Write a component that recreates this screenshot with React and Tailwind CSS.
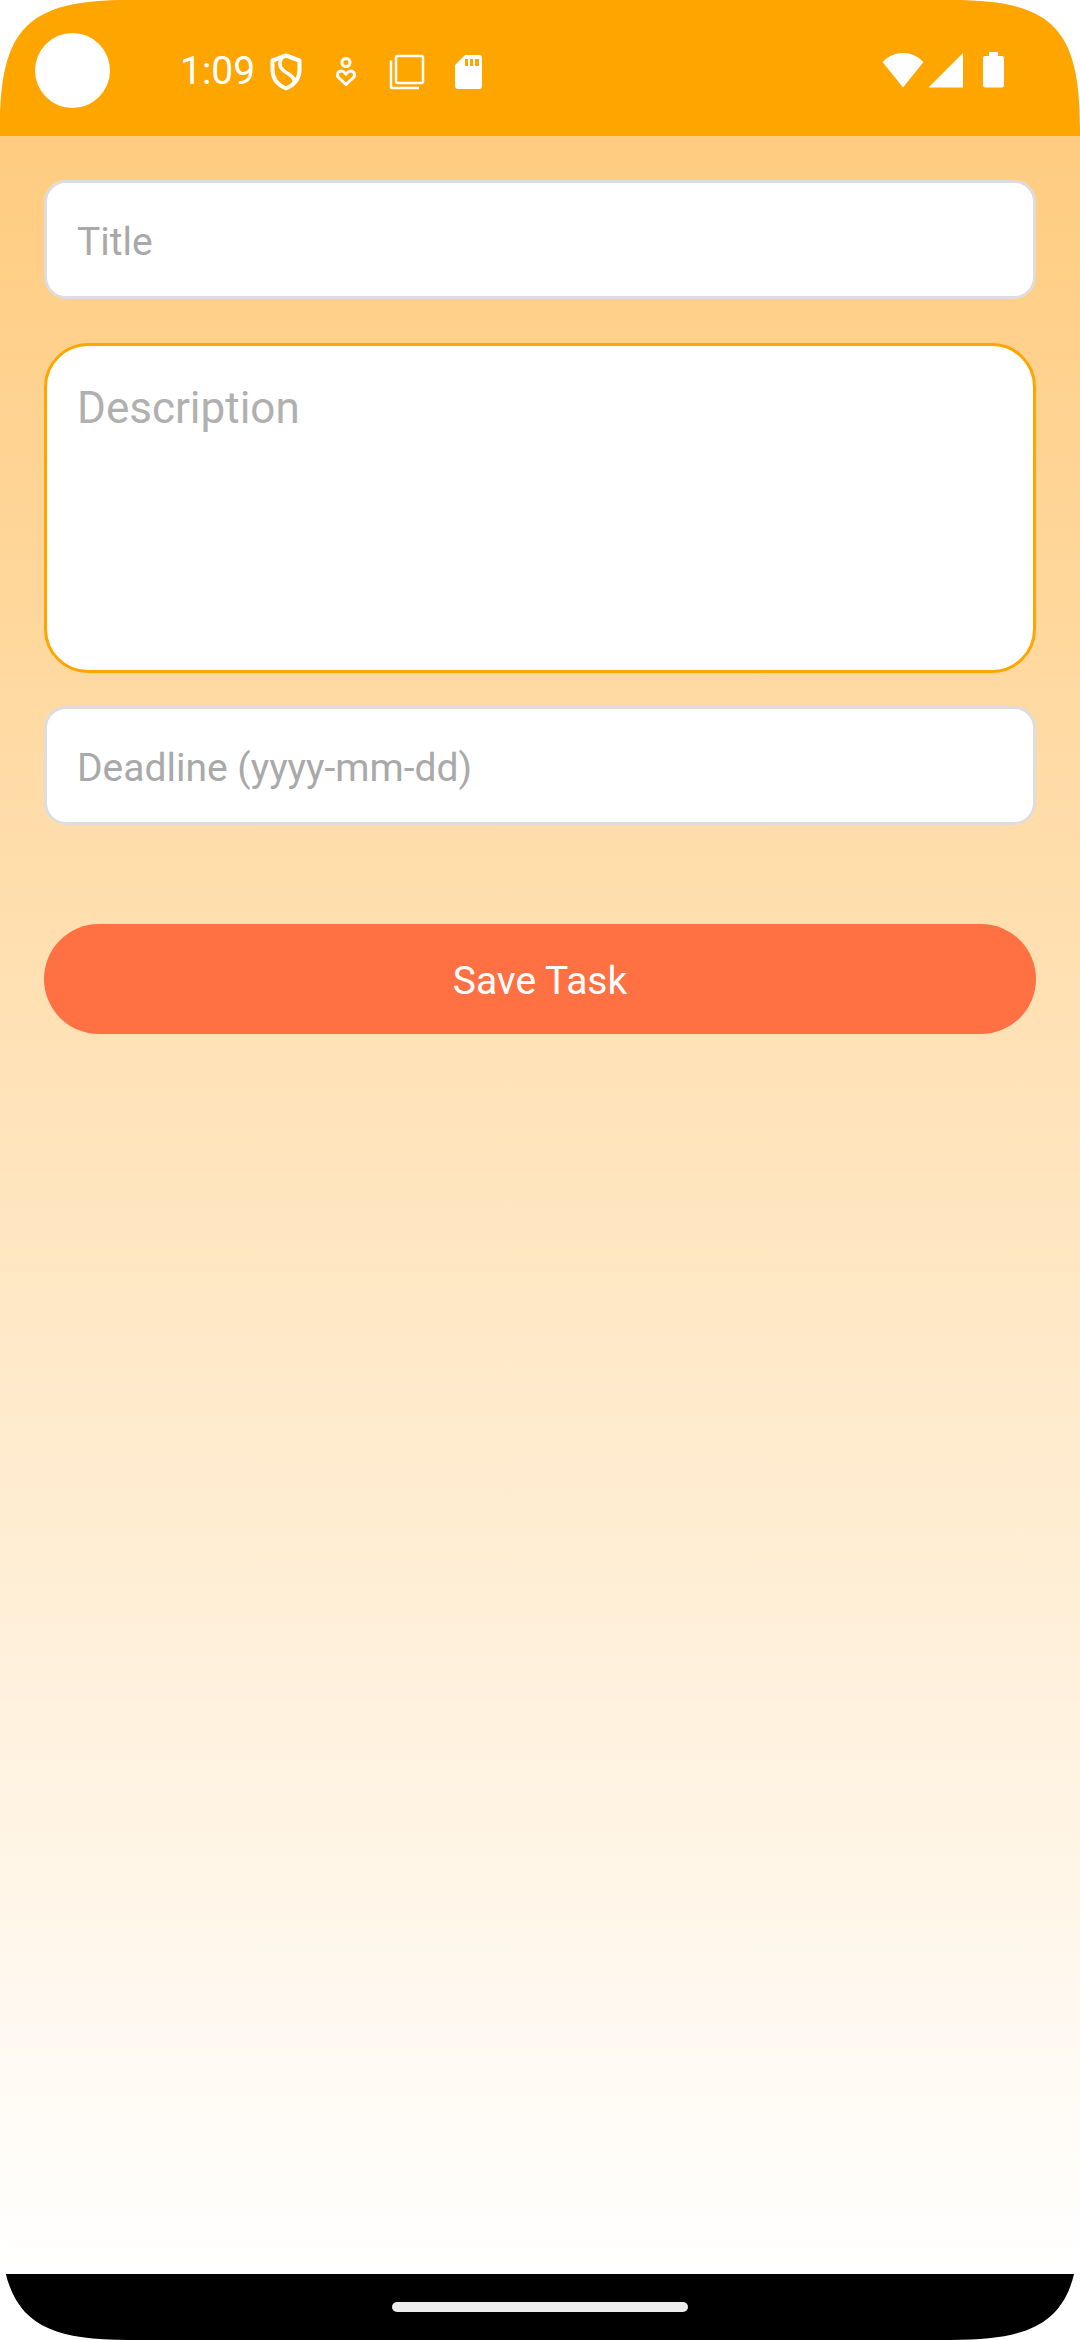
const CORNERS = [
  "top-0 left-0",
  "top-0 right-0 -scale-x-100",
  "bottom-0 left-0 -scale-y-100",
  "bottom-0 right-0 -scale-100",
];

function Corner({ className }) {
  return (
    <svg viewBox="0 0 128 128" className={`pointer-events-none absolute size-32 ${className}`} aria-hidden="true">
      <path d="M0 0H128C28 0 0 28 0 128Z" fill="#fff" />
    </svg>
  );
}

function StatusBar() {
  return (
    <header className="flex h-34 items-center bg-[#ffa500] pt-1 pr-19 pl-[35px] text-white">
      <span className="size-[75px] rounded-full bg-white" />
      <div className="ml-[70px] flex items-center pt-[3px]">
        <span className="text-[39px] leading-none">1:09</span>
        <svg viewBox="0 0 32 38" className="ml-[15px] h-[38px] w-8" fill="none" stroke="currentColor" strokeWidth="4" strokeLinejoin="round" aria-hidden="true">
          <path d="M16 2.500L2.500 7.500V17C2.500 26 8 32 16 35.500C24 32 29.500 26 29.500 17V7.500Z" />
          <path d="M13 3.500C8.500 9 9 14 14 18C19 22 26 23.500 23.500 31" strokeWidth="3.500" />
        </svg>
        <svg viewBox="0 0 22 30" className="ml-[33px] h-[30px] w-[22px]" fill="none" stroke="currentColor" strokeWidth="3" aria-hidden="true">
          <circle cx="11" cy="5.500" r="4" />
          <path d="M11 27.500L3.500 20.500C0 16.500 6 10.500 11 17C16 10.500 22 16.500 18.500 20.500Z" />
        </svg>
        <svg viewBox="0 0 36 36" className="ml-8 size-9" fill="none" stroke="currentColor" strokeWidth="2.500" aria-hidden="true">
          <rect x="7" y="2" width="27" height="27" rx="1.500" />
          <path d="M2 6.500V33Q2 34 3 34H30" />
        </svg>
        <svg viewBox="0 0 28 36" className="ml-[29px] h-9 w-7" fill="currentColor" fillRule="evenodd" aria-hidden="true">
          <path d="M11 1H25Q28 1 28 4V32Q28 35 25 35H4Q1 35 1 32V11ZM11 5V12H14V5ZM16 5V12H19V5ZM21 5V12H25V5Z" />
        </svg>
      </div>
      <svg viewBox="0 0 42 36" className="ml-auto h-9 w-[42px]" fill="currentColor" aria-hidden="true">
        <path d="M21 35.500L0.500 10C12 -2 30 -2 41.500 10Z" />
      </svg>
      <svg viewBox="0 0 35 36" className="ml-1 h-9 w-[35px]" fill="currentColor" aria-hidden="true">
        <path d="M35 1V35.500H0.500Z" />
      </svg>
      <svg viewBox="0 0 21 36" className="ml-5 h-9 w-[21px]" fill="currentColor" aria-hidden="true">
        <path d="M6 0H15V4H19Q21 4 21 6V33Q21 35.500 18.500 35.500H2.500Q0 35.500 0 33V6Q0 4 2 4H6Z" />
      </svg>
    </header>
  );
}

const fieldClass =
  "block h-[119px] w-full rounded-[22px] border-3 border-[#ddd] bg-white px-[30px] pt-1 text-[39px] placeholder:text-[#a9a9a9] outline-none";

export default function App() {
  return (
    <div className="relative flex min-h-screen flex-col overflow-hidden bg-black font-[Roboto,sans-serif]">
      <StatusBar />
      <main className="flex-1 bg-linear-to-b/srgb from-[#ffcc80] to-white px-11 pt-11">
        <form onSubmit={(event) => event.preventDefault()}>
          <input type="text" aria-label="Title" placeholder="Title" className={fieldClass} />
          <textarea
            aria-label="Description"
            placeholder="Description"
            className="mt-11 block h-[330px] w-full resize-none rounded-[44px] border-3 border-[#ffa500] bg-white px-[30px] py-9 text-[44px] leading-[52px] outline-none placeholder:text-[#b0b0b0]"
          />
          <input
            type="text"
            aria-label="Deadline (yyyy-mm-dd)"
            placeholder="Deadline (yyyy-mm-dd)"
            className={`mt-[33px] ${fieldClass}`}
          />
          <button type="submit" className="mt-[99px] block h-[110px] w-full rounded-full bg-[#ff7043] pt-1 text-[39px] text-white">
            Save Task
          </button>
        </form>
      </main>
      <footer className="flex h-[66px] items-center justify-center bg-black">
        <span className="h-[10px] w-[296px] rounded-full bg-[#ececec]" />
      </footer>
      {CORNERS.map((position) => (
        <Corner key={position} className={position} />
      ))}
    </div>
  );
}
